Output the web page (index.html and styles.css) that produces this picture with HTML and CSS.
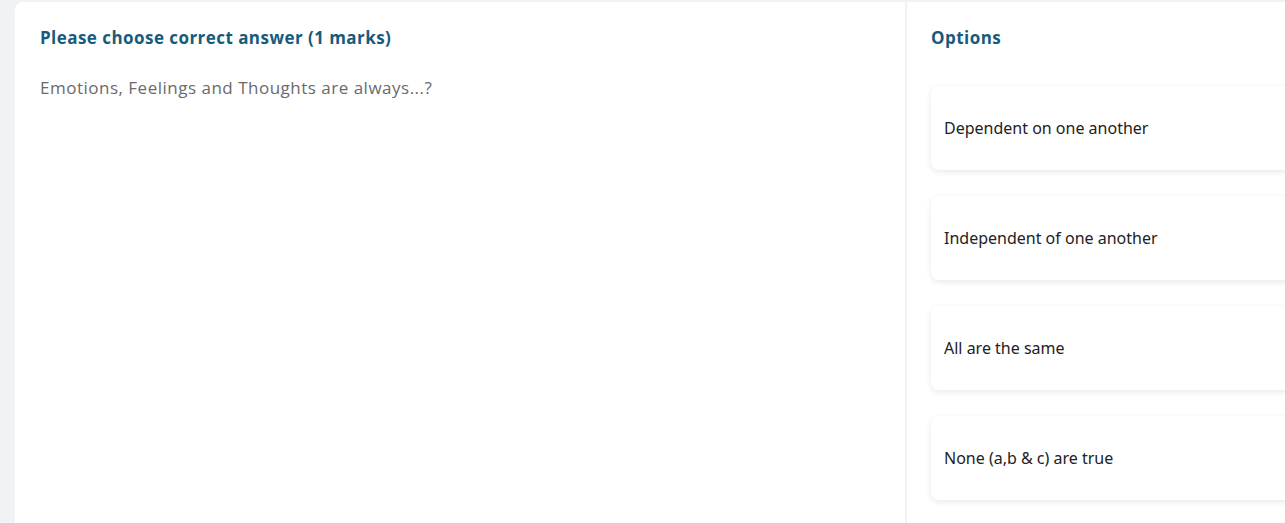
FILE: index.html
```html
<!DOCTYPE html>
<html>
<head>
<meta charset="utf-8">
<link rel="stylesheet" href="styles.css">
</head>
<body>
<div class="page">
  <div class="card">
    <section class="question">
      <h2 class="title">Please choose correct answer (1 marks)</h2>
      <p class="qtext">Emotions, Feelings and Thoughts are always...?</p>
    </section>
    <aside class="options">
      <h2 class="title">Options</h2>
      <div class="list">
        <div class="opt">Dependent on one another</div>
        <div class="opt">Independent of one another</div>
        <div class="opt">All are the same</div>
        <div class="opt">None (a,b &amp; c) are true</div>
      </div>
    </aside>
  </div>
</div>
</body>
</html>
```
FILE: styles.css
```css
html, body {
  margin: 0;
  padding: 0;
  overflow: hidden;
}
body {
  background: #f1f2f4;
  font-family: "Open Sans", "Noto Sans", sans-serif;
}
.page {
  padding: 2px 0 0 15px;
  height: 521px;
}
.card {
  background: #fff;
  border-top-left-radius: 8px;
  display: flex;
  height: 100%;
  width: 1300px;
}
.question {
  width: 892px;
  padding: 25px 25px 0;
  box-sizing: border-box;
  border-right: 2px solid #f2f3f4;
}
.title {
  margin: 0;
  font-size: 17px;
  letter-spacing: 0.45px;
  line-height: 22px;
  font-weight: 700;
  color: #175b7c;
}
.qtext {
  margin: 28px 0 0;
  font-size: 17px;
  letter-spacing: 0.5px;
  line-height: 22px;
  color: #6a6a6a;
}
.options {
  padding: 25px 0 0 24px;
  flex: 1;
}
.list {
  margin-top: 37px;
  display: flex;
  flex-direction: column;
  gap: 26px;
}
.opt {
  height: 84px;
  display: flex;
  align-items: center;
  padding: 0 13px;
  border-radius: 8px;
  background: #fff;
  box-shadow: 0 2px 6px rgba(0, 0, 0, 0.09);
  font-family: "Noto Sans", "Open Sans", sans-serif;
  font-size: 16px;
  color: #222;
}
```
